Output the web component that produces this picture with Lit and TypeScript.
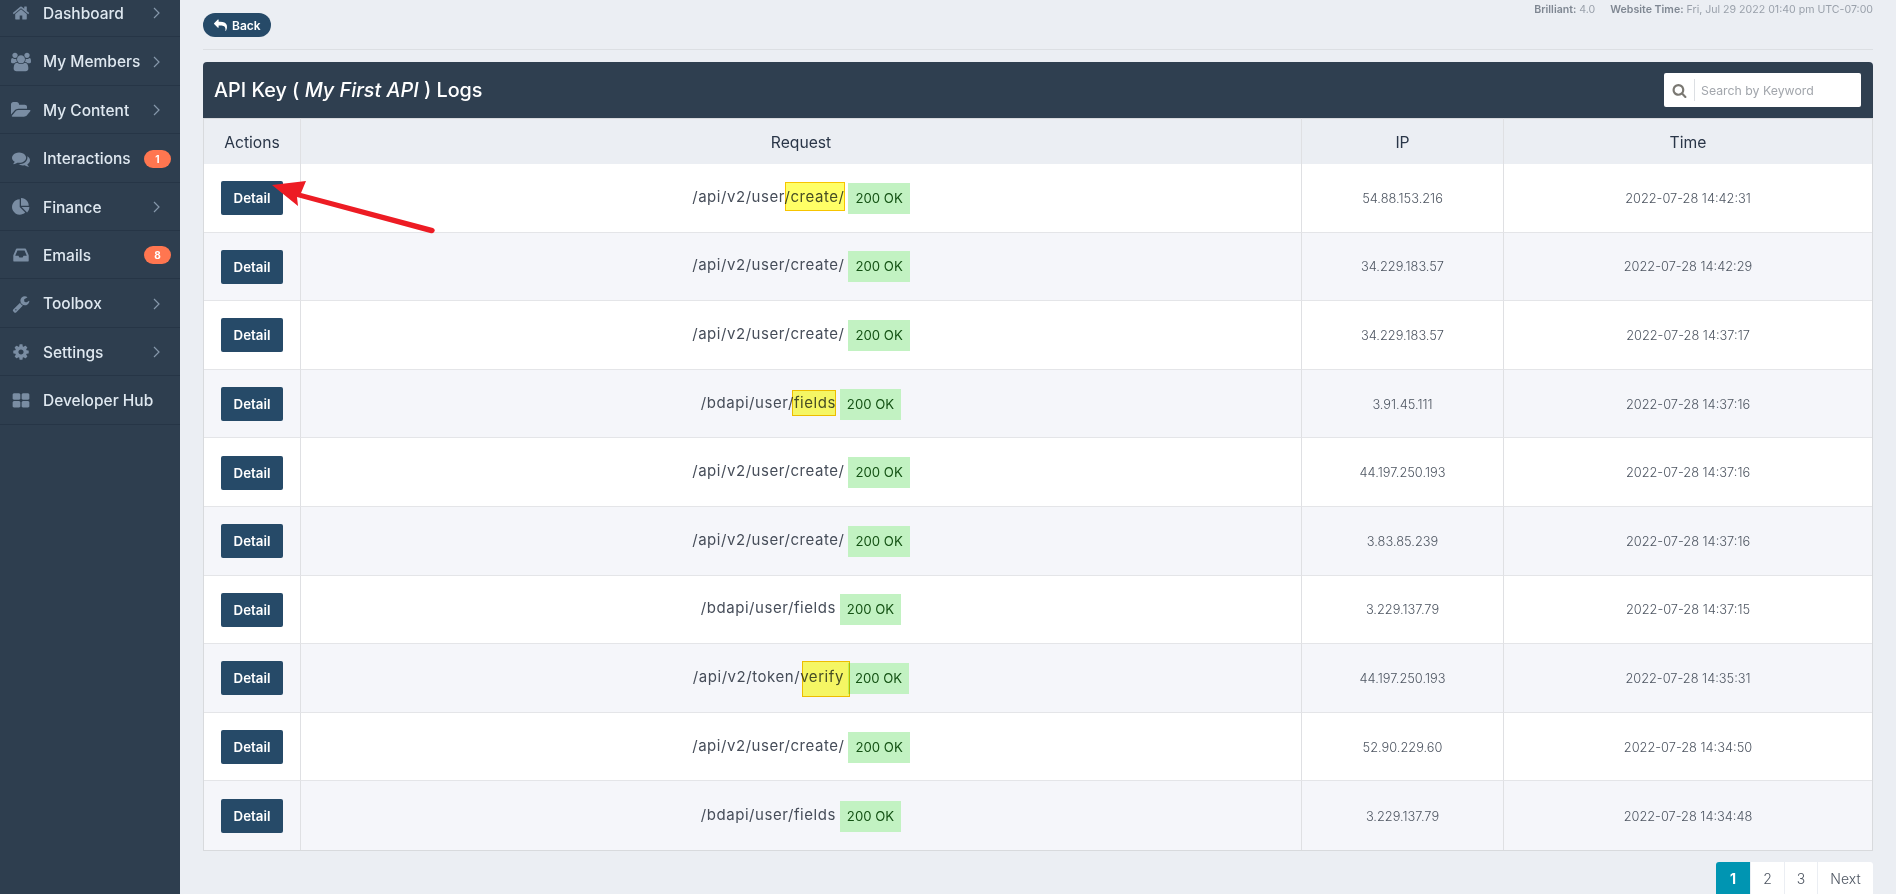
import { LitElement, html, css, svg } from 'lit'
import { customElement } from 'lit/decorators.js'

const ICONS: Record<string, { w: number; d: string }> = {
  home: { w: 1792, d: 'M1472 992v480q0 26-19 45t-45 19h-384v-384h-256v384h-384q-26 0-45-19t-19-45v-480q0-1 .5-3t.5-3l575-474 575 474q1 2 1 6zm223-69l-62 74q-8 9-21 11h-3q-13 0-21-7l-692-577-692 577q-12 8-24 7-13-2-21-11l-62-74q-8-10-7-23.5t11-21.5l719-599q32-26 76-26t76 26l244 204v-195q0-14 9-23t23-9h192q14 0 23 9t9 23v408l219 182q10 8 11 21.5t-7 23.5z' },
  users: { w: 1920, d: 'M593 896q-162 5-265 128h-134q-82 0-138-40.5t-56-118.5q0-353 124-353 6 0 43.5 21t97.5 42.5 119 21.5q67 0 133-23-5 37-5 66 0 139 81 256zm1071 637q0 120-73 189.5t-194 69.5h-874q-121 0-194-69.5t-73-189.5q0-53 3.5-103.5t14-109 26.5-108.5 43-97.5 62-81 85.5-53.5 111.5-20q10 0 43 21.5t73 48 107 48 135 21.5 135-21.5 107-48 73-48 43-21.5q61 0 111.5 20t85.5 53.5 62 81 43 97.5 26.5 108.5 14 109 3.5 103.5zm-1024-1277q0 106-75 181t-181 75-181-75-75-181 75-181 181-75 181 75 75 181zm704 384q0 159-112.5 271.5t-271.5 112.5-271.5-112.5-112.5-271.5 112.5-271.5 271.5-112.5 271.5 112.5 112.5 271.5zm576 225q0 78-56 118.5t-138 40.5h-134q-103-123-265-128 81-117 81-256 0-29-5-66 66 23 133 23 59 0 119-21.5t97.5-42.5 43.5-21q124 0 124 353zm-128-609q0 106-75 181t-181 75-181-75-75-181 75-181 181-75 181 75 75 181z' },
  folder: { w: 1920, d: 'M1879 952q0 31-31 66l-336 396q-43 51-120.5 86.5t-143.5 35.5h-1088q-34 0-60.5-13t-26.5-43q0-31 31-66l336-396q43-51 120.5-86.5t143.5-35.5h1088q34 0 60.5 13t26.5 43zm-343-344v160h-832q-94 0-197 47.5t-164 119.5l-337 396-5 6q0-4-.5-12.5t-.5-12.5v-960q0-92 66-158t158-66h320q92 0 158 66t66 158v32h544q92 0 158 66t66 158z' },
  comments: { w: 1792, d: 'M1408 768q0 139-94 257t-256.5 186.5-353.5 68.5q-86 0-176-16-124 88-278 128-36 9-86 16h-3q-11 0-20.5-8t-11.5-21q-1-3-1-6.5t.5-6.5 2-6l2.5-5 3.5-5.5 4-5 4.5-5 4-4.5q5-6 23-25t26-29.5 22.5-29 25-38.5 20.5-44q-124-72-195-177t-71-224q0-139 94-257t256.5-186.5 353.5-68.5 353.5 68.5 256.5 186.5 94 257zm384 256q0 120-71 224.5t-195 176.5q10 24 20.5 44t25 38.5 22.5 29 26 29.5 23 25q1 1 4 4.5t4.5 5 4 5 3.5 5.5l2.5 5 2 6 .5 6.5-1 6.5q-3 14-13 22t-22 7q-50-7-86-16-154-40-278-128-90 16-176 16-271 0-472-132 58 4 88 4 161 0 309-45t264-129q125-92 192-212t67-254q0-77-23-152 129 71 204 178t75 230z' },
  pie: { w: 1792, d: 'M768 890l546 546q-106 108-247.5 168t-298.5 60q-209 0-385.5-103t-279.5-279.5-103-385.5 103-385.5 279.5-279.5 385.5-103v762zm187 6h773q0 157-60 298.5t-168 247.5zm709-128h-768v-768q209 0 385.5 103t279.5 279.5 103 385.5z' },
  inbox: { w: 1792, d: 'M1151 960h316q-1-3-2.5-8.5t-2.5-7.5l-212-496h-708l-212 496q-1 3-2.5 8.5t-2.5 7.5h316l95 192h320zm513 30v482q0 26-19 45t-45 19h-1408q-26 0-45-19t-19-45v-482q0-62 25-123l238-552q10-25 36.5-42t52.5-17h832q26 0 52.5 17t36.5 42l238 552q25 61 25 123z' },
  wrench: { w: 1792, d: 'M448 1472q0-26-19-45t-45-19-45 19-19 45 19 45 45 19 45-19 19-45zm644-420l-682 682q-37 37-90 37-52 0-91-37l-106-108q-38-36-38-90 0-53 38-91l681-681q39 98 114.5 173.5t173.5 114.5zm634-435q0 39-23 106-47 134-164.5 217.5t-258.5 83.5q-185 0-316.5-131.5t-131.5-316.5 131.5-316.5 316.5-131.5q58 0 121.5 16.5t107.5 46.5q16 11 16 28t-16 28l-293 169v224l193 107q5-3 79-48.5t135.5-81 70.5-35.5q15 0 23.5 10t8.5 25z' },
  cog: { w: 1792, d: 'M1152 896q0-106-75-181t-181-75-181 75-75 181 75 181 181 75 181-75 75-181zm512-109v222q0 12-8 23t-20 13l-185 28q-19 54-39 91 35 50 107 138 10 12 10 25t-9 23q-27 37-99 108t-94 71q-12 0-26-9l-138-108q-44 23-91 38-16 136-29 186-7 28-36 28h-222q-14 0-24.5-8.5t-11.5-21.5l-28-184q-49-16-90-37l-141 107q-10 9-25 9-14 0-25-11-126-114-165-168-7-10-7-23 0-12 8-23 15-21 51-66.5t54-70.5q-27-50-41-99l-183-27q-13-2-21-12.5t-8-23.5v-222q0-12 8-23t19-13l186-28q14-46 39-92-40-57-107-138-10-12-10-24 0-10 9-23 26-36 98.5-107.5t94.5-71.5q13 0 26 10l138 107q44-23 91-38 16-136 29-186 7-28 36-28h222q14 0 24.5 8.5t11.5 21.5l28 184q49 16 90 37l142-107q9-9 24-9 13 0 25 10 129 119 165 170 7 8 7 22 0 12-8 23-15 21-51 66.5t-54 70.5q26 50 41 98l183 28q13 2 21 12.5t8 23.5z' },
  grid: { w: 1792, d: 'M832 1024v384q0 52-38 90t-90 38h-512q-52 0-90-38t-38-90v-384q0-52 38-90t90-38h512q52 0 90 38t38 90zm0-768v384q0 52-38 90t-90 38h-512q-52 0-90-38t-38-90v-384q0-52 38-90t90-38h512q52 0 90 38t38 90zm896 768v384q0 52-38 90t-90 38h-512q-52 0-90-38t-38-90v-384q0-52 38-90t90-38h512q52 0 90 38t38 90zm0-768v384q0 52-38 90t-90 38h-512q-52 0-90-38t-38-90v-384q0-52 38-90t90-38h512q52 0 90 38t38 90z' },
  reply: { w: 1792, d: 'M1792 1120q0 166-127 451-3 7-10.5 24t-13.5 30-13 22q-12 17-28 17-15 0-23.5-10t-8.5-25q0-9 2.5-26.5t2.5-23.5q5-68 5-123 0-101-17.5-181t-48.5-138.5-80-101-105.5-69.5-133-42.5-154-21.5-175.5-6h-224v256q0 26-19 45t-45 19-45-19l-512-512q-19-19-19-45t19-45l512-512q19-19 45-19t45 19 19 45v256h224q713 0 875 403 53 134 53 333z' },
  search: { w: 1792, d: 'M1216 832q0-185-131.5-316.5t-316.5-131.5-316.5 131.5-131.5 316.5 131.5 316.5 316.5 131.5 316.5-131.5 131.5-316.5zm512 832q0 52-38 90t-90 38q-54 0-90-38l-343-342q-179 124-399 124-143 0-273.5-55.5t-225-150-150-225-55.5-273.5 55.5-273.5 150-225 225-150 273.5-55.5 273.5 55.5 225 150 150 225 55.5 273.5q0 220-124 399l343 343q37 37 37 90z' },
}

const icon = (name: string, size: number) => {
  const i = ICONS[name]
  return html`<svg class="fa" width=${size} height=${size} viewBox="0 0 ${i.w} 1792" fill="currentColor">${svg`<path d=${i.d}></path>`}</svg>`
}

const NAV = [
  { label: 'Dashboard', icon: 'home' },
  { label: 'My Members', icon: 'users' },
  { label: 'My Content', icon: 'folder' },
  { label: 'Interactions', icon: 'comments', badge: '1' },
  { label: 'Finance', icon: 'pie' },
  { label: 'Emails', icon: 'inbox', badge: '8' },
  { label: 'Toolbox', icon: 'wrench' },
  { label: 'Settings', icon: 'cog' },
  { label: 'Developer Hub', icon: 'grid', noArrow: true },
]

type Log = { base: string; mark?: string; kind?: string; ip: string; time: string }

const LOGS: Log[] = [
  { base: '/api/v2/user', mark: '/create/', kind: 'create', ip: '54.88.153.216', time: '2022-07-28 14:42:31' },
  { base: '/api/v2/user/create/', ip: '34.229.183.57', time: '2022-07-28 14:42:29' },
  { base: '/api/v2/user/create/', ip: '34.229.183.57', time: '2022-07-28 14:37:17' },
  { base: '/bdapi/user', mark: '/fields', kind: 'fields', ip: '3.91.45.111', time: '2022-07-28 14:37:16' },
  { base: '/api/v2/user/create/', ip: '44.197.250.193', time: '2022-07-28 14:37:16' },
  { base: '/api/v2/user/create/', ip: '3.83.85.239', time: '2022-07-28 14:37:16' },
  { base: '/bdapi/user/fields', ip: '3.229.137.79', time: '2022-07-28 14:37:15' },
  { base: '/api/v2/token/', mark: 'verify', kind: 'verify', ip: '44.197.250.193', time: '2022-07-28 14:35:31' },
  { base: '/api/v2/user/create/', ip: '52.90.229.60', time: '2022-07-28 14:34:50' },
  { base: '/bdapi/user/fields', ip: '3.229.137.79', time: '2022-07-28 14:34:48' },
]

@customElement('app-root')
export class AppRoot extends LitElement {
  static styles = css`
    :host {
      display: flex;
      height: 100vh;
      overflow: hidden;
      position: relative;
      background: #ebeef3;
      color: #3b4450;
      font-family: 'Inter', 'Open Sans', sans-serif;
    }
    .fa { display: block; flex: none; }

    .side {
      flex: none;
      width: 180px;
      background: #2e3e4f;
      overflow: hidden;
    }
    .side nav { margin-top: -11px; }
    .item {
      display: flex;
      align-items: center;
      height: 48.4px;
      padding-top: 1.5px;
      box-sizing: border-box;
      border-bottom: 1px solid #263546;
      color: #dfe8f0;
      font-size: 15.5px;
      font-weight: 500;
    }
    .item .ic {
      flex: none;
      width: 43px;
      display: flex;
      justify-content: center;
      color: #7a8da3;
      padding-right: 1px;
      box-sizing: border-box;
    }
    .item .lb { flex: 1; white-space: nowrap; }
    .item .chev { flex: none; margin-right: 20px; color: #8698ab; }
    .item .badge {
      flex: none;
      width: 27px;
      height: 18px;
      margin-right: 9px;
      border-radius: 9px;
      background: #ff7650;
      color: #fff;
      font-size: 10px;
      font-weight: 700;
      line-height: 18px;
      text-align: center;
    }

    .main {
      flex: 1;
      min-width: 0;
      padding: 13px 23px 0;
    }
    .top {
      display: flex;
      justify-content: space-between;
      align-items: flex-start;
      height: 36px;
      border-bottom: 1px solid #dcdfe3;
      margin-bottom: 12px;
    }
    .back {
      display: flex;
      align-items: center;
      gap: 5px;
      height: 24px;
      width: 68px;
      box-sizing: border-box;
      padding-left: 11px;
      border-radius: 12px;
      background: #264a68;
      color: #fff;
      font-size: 12px;
      font-weight: 600;
    }
    .meta {
      display: flex;
      gap: 15px;
      margin-top: -11px;
      font-size: 10.6px;
      line-height: 16px;
      color: #9aa1ab;
      white-space: nowrap;
    }
    .meta b { color: #7f8792; font-weight: 600; }

    .head {
      display: flex;
      justify-content: space-between;
      align-items: center;
      height: 56px;
      padding: 0 12px 0 11px;
      border-radius: 4px 4px 0 0;
      background: #2f3f50;
      color: #fff;
      font-size: 19.8px;
      font-weight: 500;
    }
    .head em { font-style: italic; }
    .search {
      display: flex;
      align-items: center;
      width: 197px;
      height: 34px;
      border-radius: 2px;
      background: #fff;
      font-size: 12.3px;
      font-weight: 400;
      color: #a2a6ac;
    }
    .search .glass {
      flex: none;
      width: 31px;
      height: 22px;
      margin-right: 6px;
      display: flex;
      align-items: center;
      justify-content: center;
      border-right: 1px solid #dcdfe3;
      box-sizing: border-box;
      color: #7a7872;
    }

    table {
      width: 100%;
      table-layout: fixed;
      border-collapse: separate;
      border-spacing: 0;
      border-left: 1px solid #d8dadd;
      border-right: 1px solid #d8dadd;
      border-bottom: 1px solid #d8dadd;
      box-sizing: border-box;
    }
    th {
      height: 46px;
      padding: 1px 0 0;
      font-size: 15.7px;
      font-weight: 400;
      color: #2a3648;
      background: #ebeef3;
      border-top: 1px solid #d8dadd;
      box-sizing: border-box;
    }
    td {
      height: 68.6px;
      padding: 1px 0 0;
      box-sizing: border-box;
      text-align: center;
      font-size: 12.8px;
      font-weight: 300;
      color: #4d5561;
      border-bottom: 1px solid #e4e5e8;
    }
    tbody tr:last-child td { border-bottom: 0; }
    tbody tr { background: #fff; }
    tbody tr:nth-child(even) { background: #f5f6fa; }
    th + th, td + td { border-left: 1px solid #dfe0e3; }
    .detail {
      display: inline-block;
      width: 62px;
      height: 34px;
      line-height: 34px;
      border-radius: 2px;
      background: #264a68;
      color: #fff;
      font-size: 13.3px;
      font-weight: 600;
      vertical-align: middle;
    }
    .req {
      font-size: 15px;
      font-weight: 400;
      letter-spacing: 0.55px;
      color: #464d59;
      white-space: nowrap;
    }
    .status {
      display: inline-block;
      height: 31px;
      line-height: 31px;
      padding: 0 7px;
      margin-left: 4px;
      background: #c2f2c2;
      color: #145214;
      font-size: 13.2px;
      font-weight: 400;
      vertical-align: middle;
    }
    .mark { position: relative; }
    .mark::after {
      content: '';
      position: absolute;
      box-sizing: border-box;
      border: 1.5px solid #f7c400;
      background: rgba(255, 255, 0, 0.6);
      mix-blend-mode: multiply;
    }
    .mark.create::after { inset: -5px -1px -5px 1px; }
    .mark.fields::after { inset: -3px 0 -4px 4px; }
    .mark.verify::after { inset: -6px -6px -11px 2px; }

    .pager {
      display: flex;
      justify-content: flex-end;
      gap: 1px;
      margin-top: 11px;
      font-size: 14px;
      font-weight: 300;
      color: #4d5561;
    }
    .pager span {
      width: 33px;
      height: 40px;
      padding-top: 8px;
      box-sizing: border-box;
      text-align: center;
      background: #fff;
    }
    .pager .on {
      width: 34px;
      background: #0095b2;
      color: #fff;
      font-weight: 700;
      border-radius: 3px 0 0 0;
    }
    .pager .third { width: 32px; }
    .pager .next { width: 55px; border-radius: 0 3px 0 0; }

    .arrow {
      position: absolute;
      left: 0;
      top: 0;
      pointer-events: none;
    }
  `

  render() {
    return html`
      <aside class="side">
        <nav>
          ${NAV.map(
            (n) => html`
              <div class="item">
                <span class="ic">${icon(n.icon, n.icon === 'users' || n.icon === 'folder' ? 20 : 18)}</span>
                <span class="lb">${n.label}</span>
                ${n.badge
                  ? html`<span class="badge">${n.badge}</span>`
                  : n.noArrow
                    ? ''
                    : html`<svg class="chev" width="7" height="12" viewBox="0 0 7 12" fill="none" stroke="currentColor" stroke-width="1.2"><path d="M1 1l5 5-5 5"></path></svg>`}
              </div>
            `,
          )}
        </nav>
      </aside>

      <main class="main">
        <div class="top">
          <div class="back">${icon('reply', 13)}<span>Back</span></div>
          <div class="meta">
            <span><b>Brilliant:</b> 4.0</span>
            <span><b>Website Time:</b> Fri, Jul 29 2022 01:40 pm UTC-07:00</span>
          </div>
        </div>

        <div class="head">
          <span>API Key ( <em>My First API</em> ) Logs</span>
          <div class="search">
            <span class="glass">${icon('search', 15)}</span>
            <span>Search by Keyword</span>
          </div>
        </div>

        <table>
          <colgroup>
            <col style="width: 96px" />
            <col style="width: 1001px" />
            <col style="width: 202px" />
            <col />
          </colgroup>
          <thead>
            <tr><th>Actions</th><th>Request</th><th>IP</th><th>Time</th></tr>
          </thead>
          <tbody>
            ${LOGS.map(
              (l) => html`
                <tr>
                  <td><span class="detail">Detail</span></td>
                  <td>
                    <span class="req">${l.base}${l.mark ? html`<span class="mark ${l.kind}">${l.mark}</span>` : ''}</span
                    ><span class="status">200 OK</span>
                  </td>
                  <td>${l.ip}</td>
                  <td>${l.time}</td>
                </tr>
              `,
            )}
          </tbody>
        </table>

        <div class="pager">
          <span class="on">1</span><span>2</span><span class="third">3</span><span class="next">Next</span>
        </div>
      </main>

      <svg class="arrow" width="460" height="240" viewBox="0 0 460 240">
        <path d="M272 185L306 181 301 193 433 228Q436 230 434 232 433 234 430 233L297 197 298 206Z" fill="#ed1c24"></path>
      </svg>
    `
  }
}
